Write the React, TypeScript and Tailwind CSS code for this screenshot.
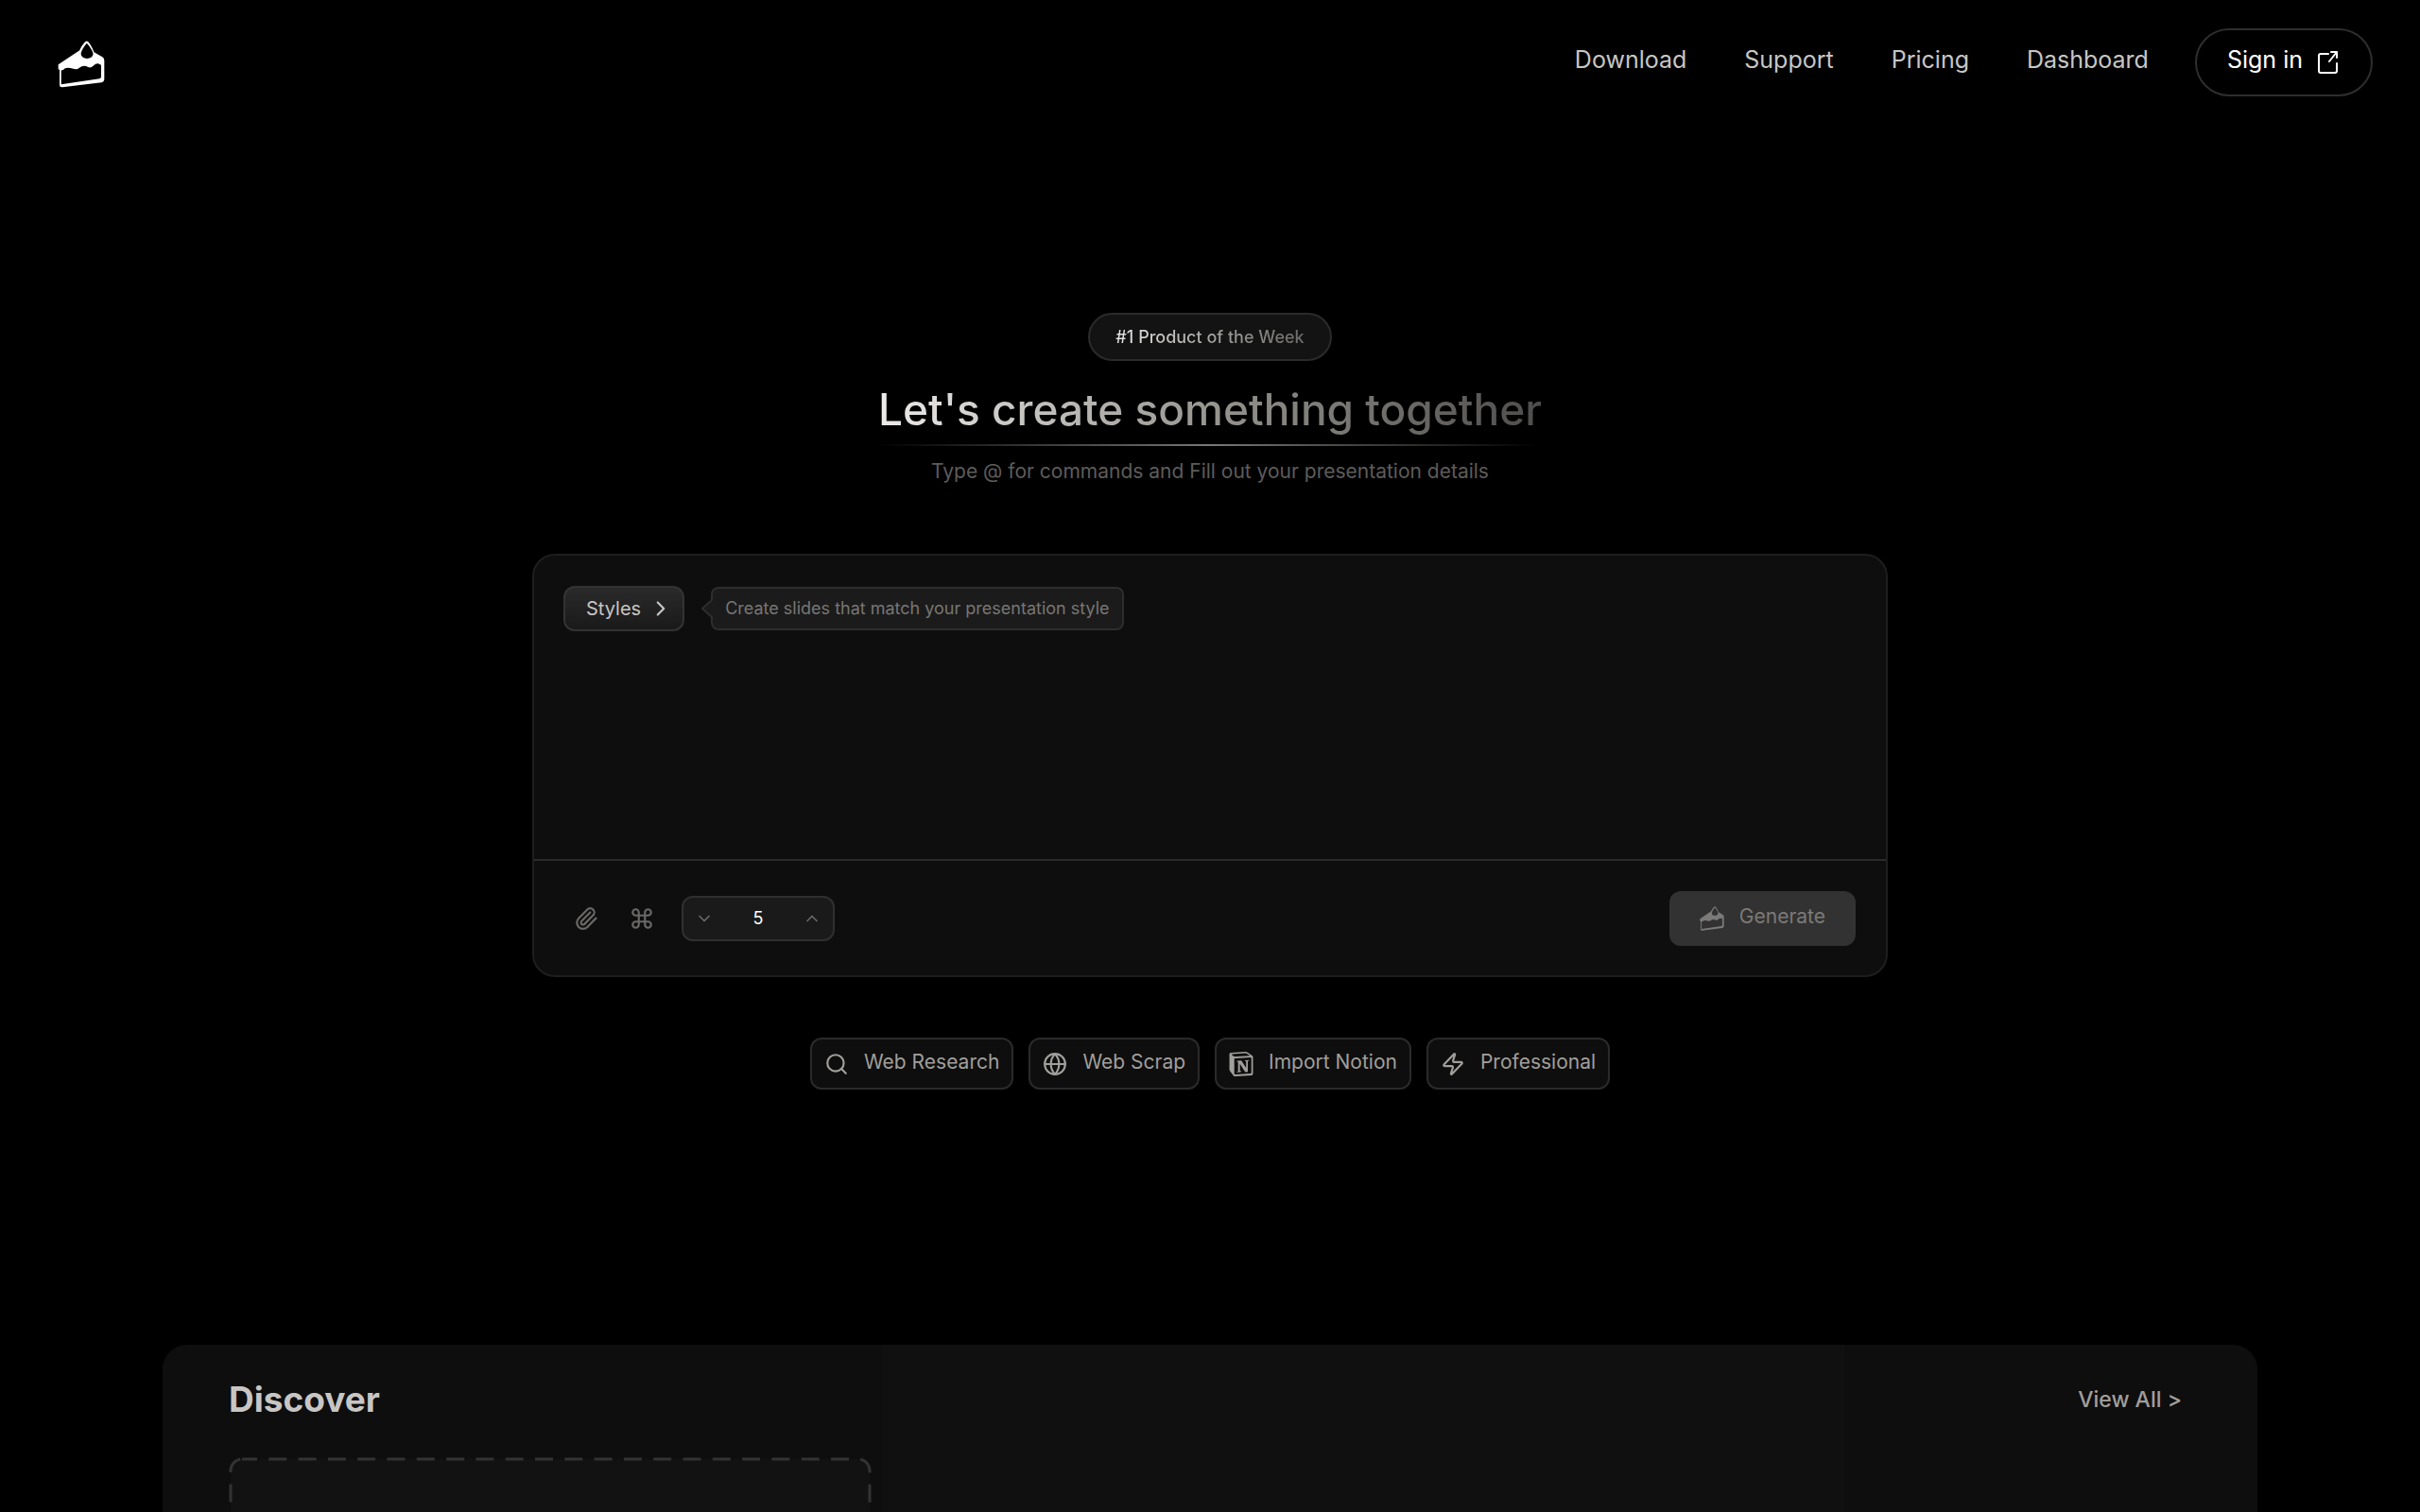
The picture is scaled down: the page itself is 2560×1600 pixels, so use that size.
import type { ReactNode } from 'react'
import { ChevronDown, ChevronRight, ChevronUp, Command, Globe, Paperclip, Search, Zap } from 'lucide-react'
import { SiNotion } from 'react-icons/si'

const navLinks = ['Download', 'Support', 'Pricing', 'Dashboard']

const quickActions: { label: string; icon: ReactNode }[] = [
  { label: 'Web Research', icon: <Search className="size-[26px]" strokeWidth={2} /> },
  { label: 'Web Scrap', icon: <Globe className="size-[26px]" strokeWidth={2} /> },
  { label: 'Import Notion', icon: <SiNotion className="size-[26px]" /> },
  { label: 'Professional', icon: <Zap className="size-[26px]" strokeWidth={2} /> },
]

function CakeLogo({ className }: { className?: string }) {
  return (
    <svg className={className} viewBox="66 70 144 148" fill="currentColor" aria-hidden="true">
      <path
        fillRule="evenodd"
        d="M66 145 L133 100 C137 90 147 76 151 73 Q155 70 159 73 C164 78 173 92 178 106 L204 121 Q210 125 210 132 V190 Q210 199 201 201 L79 216 Q70 217 70 209 V162 L66 159 Z
           M155 78 C148 86 137 103 137 111 C137 121 146 126 156 126 C167 126 175 120 175 111 C175 103 162 85 155 78 Z
           M75 163 L81 162 Q87 155 95 155 Q105 155 113 158 Q124 162 132 155 Q139 149 147 149 Q154 149 159 153 Q170 157 177 148 Q183 141 191 142 L200 146 V184 Q200 188 195 189 L75 207 Z"
      />
    </svg>
  )
}

function ExternalIcon() {
  return (
    <svg className="h-6 w-[22px]" viewBox="0 0 22 24" fill="none" stroke="currentColor" strokeWidth={2} strokeLinecap="round" strokeLinejoin="round" aria-hidden="true">
      <path d="M11 3H3a2 2 0 0 0-2 2v16a2 2 0 0 0 2 2h15a2 2 0 0 0 2-2v-8" />
      <path d="M14 1h6v6M20 1l-8 10" />
    </svg>
  )
}

function Header() {
  return (
    <header className="flex items-center justify-between pt-[30px] pr-[50px] pl-[61px]">
      <a href="#home" aria-label="Home" className="pt-1 text-white">
        <CakeLogo className="size-[50px]" />
      </a>
      <nav className="flex items-center gap-[61px] text-[25px] text-[#c8c6c4]">
        {navLinks.map((link) => (
          <a key={link} href={`#${link.toLowerCase()}`} className="pb-1">
            {link}
          </a>
        ))}
        <button className="-ml-3 flex h-[72px] items-center gap-4 rounded-full border-2 border-[#2e2e2e] pr-[34px] pl-8 text-white">
          <span className="pb-1">Sign in</span>
          <ExternalIcon />
        </button>
      </nav>
    </header>
  )
}

function Hero() {
  return (
    <div className="flex flex-col items-center">
      <div className="flex h-[51px] items-center rounded-full border-2 border-[#2b2b2b] bg-[#131313] px-[27px]">
        <span className="bg-linear-to-r from-[#e7e5e4] via-[#a8a6a3] to-[#6b6967] bg-clip-text text-lg font-medium text-transparent">
          #1 Product of the Week
        </span>
      </div>
      <h1 className="mt-5 bg-linear-to-r from-[#eeeceb] via-[#979590] to-[#4f4d4c] bg-clip-text text-[46px] leading-[62px] font-medium text-transparent">
        Let's create something together
      </h1>
      <div className="mt-1.5 h-0.5 w-[700px] bg-linear-to-r from-transparent via-[#7a7876] to-transparent" />
      <p className="mt-[11px] text-[21px] leading-8 text-[#5e5c5a]">Type @ for commands and Fill out your presentation details</p>
    </div>
  )
}

function PromptCard() {
  return (
    <div className="flex h-[448px] w-full max-w-[1434px] flex-col rounded-3xl border-2 border-[#1e1e1e] bg-[#0e0e0e]">
      <div className="flex items-center gap-[18px] px-[31px] pt-8">
        <button className="flex h-12 items-center gap-2 rounded-xl border-2 border-[#333] bg-linear-to-b from-[#2a2a2a] to-[#1a1a1a] pr-2.5 pl-[22px] text-xl text-[#c8c6c4]">
          Styles
          <ChevronRight className="size-[26px]" strokeWidth={2} />
        </button>
        <div className="flex items-center">
          <svg className="z-10 -mr-0.5 h-5 w-3" viewBox="0 0 12 20" aria-hidden="true">
            <path d="M12 0 1 10l11 10Z" fill="#1b1b1b" />
            <path d="M12 0 1 10l11 10" fill="none" stroke="#2e2e2e" strokeWidth={2} />
          </svg>
          <div className="flex h-[46px] items-center rounded-lg border-2 border-[#2e2e2e] bg-[#1b1b1b] px-[13px] text-lg text-[#787674]">
            Create slides that match your presentation style
          </div>
        </div>
      </div>
      <textarea aria-label="Presentation details" className="mx-8 mt-4 flex-1 resize-none bg-transparent text-xl text-white outline-none" />
      <div className="flex h-[123px] items-center justify-between border-t-2 border-[#2b2b2b] pr-8 pl-[42px]">
        <div className="flex items-center text-[#6b6967]">
          <button aria-label="Attach file">
            <Paperclip className="size-[26px]" strokeWidth={2} />
          </button>
          <button aria-label="Commands" className="ml-[33px]">
            <Command className="size-[26px]" strokeWidth={2} />
          </button>
          <div className="ml-[29px] flex h-12 w-[162px] items-center justify-between rounded-xl border-2 border-[#303030] bg-[#1a1a1a] px-3">
            <button aria-label="Fewer slides">
              <ChevronDown className="size-5" strokeWidth={2} />
            </button>
            <input aria-label="Number of slides" defaultValue="5" className="w-12 bg-transparent text-center text-lg text-white outline-none" />
            <button aria-label="More slides">
              <ChevronUp className="size-5" strokeWidth={2} />
            </button>
          </div>
        </div>
        <button className="flex h-[58px] items-center gap-4 rounded-xl bg-[#323232] px-8 text-[21px] text-[#7c7a78]">
          <CakeLogo className="size-[26px]" />
          <span className="pb-1">Generate</span>
        </button>
      </div>
    </div>
  )
}

function Discover() {
  return (
    <section className="mx-[172px] mt-[270px] flex-1 rounded-t-[26px] bg-[linear-gradient(90deg,#0e0e0e_34.4%,#101010_34.4%,#101010_80.3%,#0e0e0e_80.3%)] px-[70px]">
      <div className="flex items-center justify-between pt-8 pr-2.5">
        <h2 className="text-[37px] leading-[52px] font-bold text-[#c8c6c4]">Discover</h2>
        <a href="#discover" className="text-[23px] font-medium text-[#a19f9b]">
          View All &gt;
        </a>
      </div>
      <div className="mt-[35px] h-[400px] w-[680px]">
        <svg className="size-full" viewBox="0 0 680 400" fill="none" aria-hidden="true">
          <rect x="2" y="2" width="676" height="392" rx="12" fill="#121212" stroke="#333" strokeWidth={3} strokeDasharray="19 12.3" strokeDashoffset={3} />
        </svg>
      </div>
    </section>
  )
}

export default function App() {
  return (
    <div className="flex h-screen flex-col overflow-hidden bg-black font-['Inter',sans-serif]">
      <Header />
      <main className="flex flex-1 flex-col pt-[229px]">
        <Hero />
        <div className="mt-[71px] flex justify-center">
          <PromptCard />
        </div>
        <div className="mt-16 flex justify-center gap-4">
          {quickActions.map((action) => (
            <button
              key={action.label}
              className="flex h-[55px] items-center gap-4 rounded-xl border-2 border-[#2a2a2a] bg-[#0e0e0e] px-[13px] text-[21px] text-[#a19f9b]"
            >
              {action.icon}
              <span className="pb-1">{action.label}</span>
            </button>
          ))}
        </div>
        <Discover />
      </main>
    </div>
  )
}
